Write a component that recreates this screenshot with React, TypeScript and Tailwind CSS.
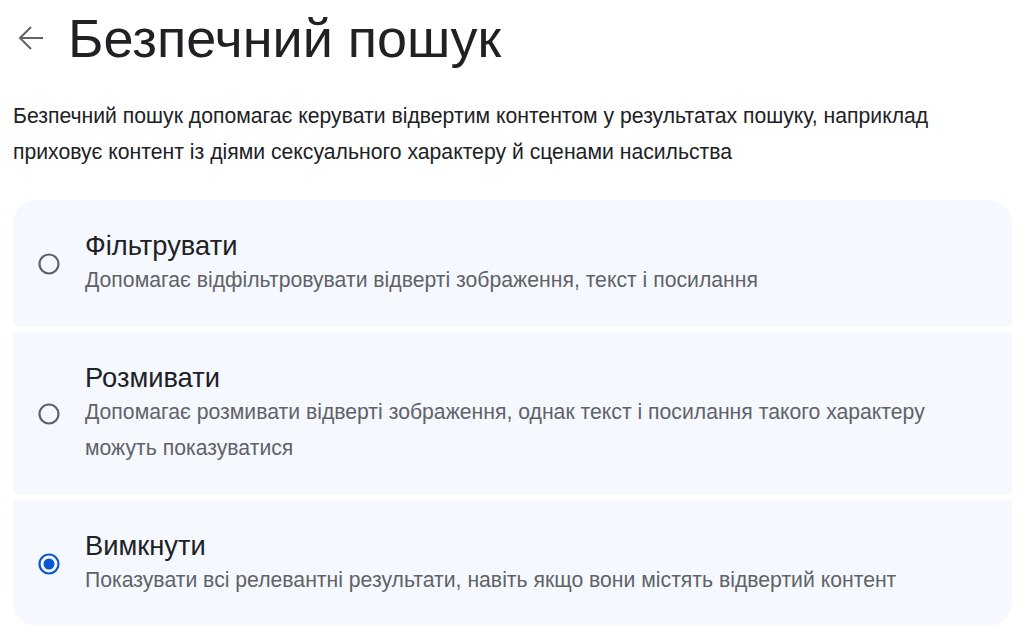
import { useState } from "react";

const options = [
  {
    id: "filter",
    title: "Фільтрувати",
    desc: "Допомагає відфільтровувати відверті зображення, текст і посилання",
  },
  {
    id: "blur",
    title: "Розмивати",
    desc: "Допомагає розмивати відверті зображення, однак текст і посилання такого характеру можуть показуватися",
  },
  {
    id: "off",
    title: "Вимкнути",
    desc: "Показувати всі релевантні результати, навіть якщо вони містять відвертий контент",
  },
];

function Radio({ checked }: { checked: boolean }) {
  return (
    <svg width="22" height="22" viewBox="0 0 22 22" className="shrink-0">
      <circle
        cx="11"
        cy="11"
        r="9.5"
        fill="none"
        stroke={checked ? "#0b57d0" : "#5f6368"}
        strokeWidth="2.2"
      />
      {checked && <circle cx="11" cy="11" r="5.5" fill="#0b57d0" />}
    </svg>
  );
}

export default function App() {
  const [value, setValue] = useState("off");

  return (
    <div
      className="min-h-screen bg-white pl-[13px] pr-[12px] text-[#202124]"
      style={{ fontFamily: '"Liberation Sans", Arial, sans-serif' }}
    >
      <div className="flex h-[64px] items-center pt-[6px] box-content">
        <button className="mr-[24px] ml-[5px] text-[#5f6368]" aria-label="Назад">
          <svg width="26" height="26" viewBox="0 0 26 26" fill="none" stroke="currentColor" strokeWidth="2">
            <path d="M25 13H2" />
            <path d="M13 2 2 13l11 11" />
          </svg>
        </button>
        <h1 className="text-[54px] leading-[64px] font-normal">Безпечний пошук</h1>
      </div>

      <p className="mt-[28px] text-[21.2px] leading-[36px]">
        Безпечний пошук допомагає керувати відвертим контентом у результатах пошуку, наприклад
        <br />
        приховує контент із діями сексуального характеру й сценами насильства
      </p>

      <div className="mt-[30px] flex flex-col gap-[6px]">
        {options.map((o, i) => (
          <label
            key={o.id}
            onClick={() => setValue(o.id)}
            className={
              "flex cursor-pointer items-center bg-[#f5f8fe] pl-[25px] pr-[24px] pt-[30px] pb-[28px] " +
              (i === 0
                ? "rounded-t-[24px] rounded-b-[4px]"
                : i === options.length - 1
                ? "rounded-t-[4px] rounded-b-[24px]"
                : "rounded-[4px]")
            }
          >
            <Radio checked={value === o.id} />
            <div className="ml-[25px]">
              <div className="text-[27.3px] leading-[32px]">{o.title}</div>
              <div className="text-[21.2px] leading-[36px] text-[#5f6368]">{o.desc}</div>
            </div>
          </label>
        ))}
      </div>
    </div>
  );
}
